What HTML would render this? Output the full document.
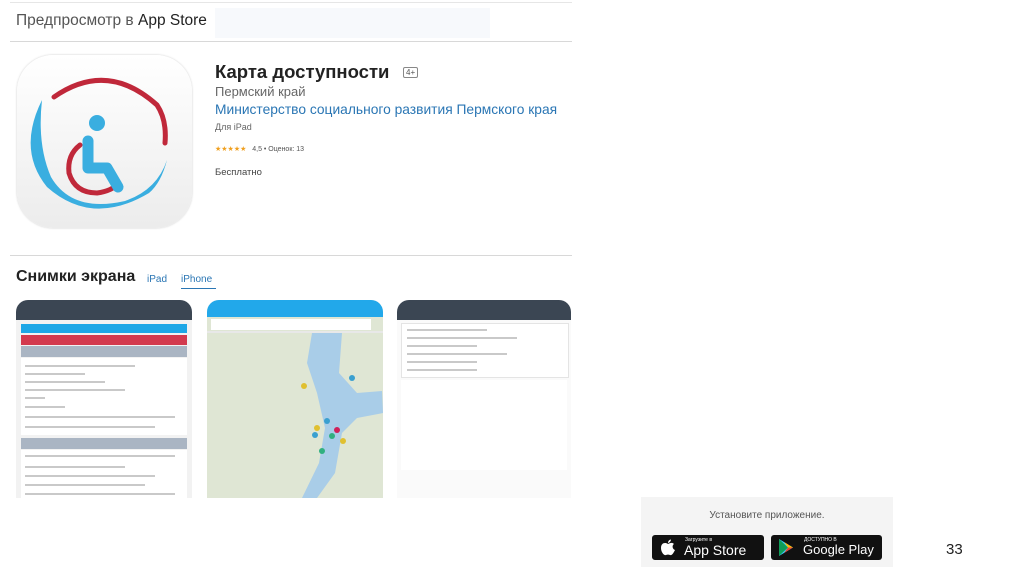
<!DOCTYPE html>
<html><head><meta charset="utf-8"><style>
body{margin:0;width:1024px;height:574px;background:#fff;font-family:"Liberation Sans",sans-serif;position:relative;overflow:hidden}
.a{position:absolute}
.ln{position:absolute;height:1px;background:#d8d8d8}
.tl{position:absolute;height:2px;background:#c9c9c9}
</style></head><body>
<div class="ln" style="left:10px;top:2px;width:562px;background:#e6e6e6"></div>
<div class="a" style="left:215px;top:8px;width:275px;height:30px;background:#f7f9fc"></div>
<div class="a" style="left:16px;top:12px;font-size:15.5px;color:#555">Предпросмотр в <span style="color:#222">App Store</span></div>
<div class="ln" style="left:10px;top:41px;width:562px"></div>
<div class="a" style="left:17px;top:55px;width:175px;height:173px;border-radius:36px;background:linear-gradient(#fff,#ececec);box-shadow:0 0 2px #ccc"></div>
<svg class="a" style="left:17px;top:55px" width="175" height="173" viewBox="0 0 175 173">
<path d="M37 42 Q90 5 140 50 Q150 65 148 88" fill="none" stroke="#c0283a" stroke-width="5" stroke-linecap="round"/>
<path d="M25 45 Q0 95 30 132 Q75 172 132 138 Q144 128 150 105 Q140 135 108 146 Q55 158 34 122 Q20 90 25 45Z" fill="#3aaee0"/>
<path d="M63 90 Q50 100 52 118 Q58 138 80 138 Q95 136 102 128" fill="none" stroke="#c0283a" stroke-width="5" stroke-linecap="round"/>
<circle cx="80" cy="68" r="8" fill="#3aaee0"/>
<path d="M71 86 V113 H90 L101 132" fill="none" stroke="#3aaee0" stroke-width="11" stroke-linecap="round" stroke-linejoin="round"/>
</svg>
<div class="a" style="left:215px;top:61px;font-size:18.5px;font-weight:bold;color:#222">Карта доступности</div>
<div class="a" style="left:403px;top:67px;font-size:8px;line-height:9px;color:#555;border:1px solid #888;border-radius:2px;padding:0 2px">4+</div>
<div class="a" style="left:215px;top:84px;font-size:13px;color:#666">Пермский край</div>
<div class="a" style="left:215px;top:102px;font-size:13.8px;color:#2a76b4">Министерство социального развития Пермского края</div>
<div class="a" style="left:215px;top:122px;font-size:9px;color:#666">Для iPad</div>
<div class="a" style="left:215px;top:145px;font-size:7px;color:#555"><span style="color:#f0a020">★★★★★</span> &nbsp; 4,5 • Оценок: 13</div>
<div class="a" style="left:215px;top:167px;font-size:9.5px;color:#444">Бесплатно</div>
<div class="ln" style="left:10px;top:255px;width:562px"></div>
<div class="a" style="left:16px;top:268px;font-size:16px;font-weight:bold;color:#222">Снимки экрана</div>
<div class="a" style="left:147px;top:274px;font-size:10px;color:#2a76b4">iPad</div>
<div class="a" style="left:181px;top:274px;font-size:10px;color:#2a76b4">iPhone</div>
<div class="a" style="left:181px;top:288px;width:35px;height:1px;background:#2a76b4"></div>
<!-- shot 1 -->
<div class="a" style="left:16px;top:300px;width:176px;height:198px;background:#f2f2f2;border-radius:12px 12px 0 0;overflow:hidden">
<div class="a" style="left:0;top:0;width:176px;height:20px;background:#3b4653"></div>
<div class="a" style="left:5px;top:24px;width:166px;height:9px;background:#1ea7e6"></div>
<div class="a" style="left:5px;top:35px;width:166px;height:10px;background:#d33a4e"></div>
<div class="a" style="left:5px;top:46px;width:166px;height:11px;background:#aab5c3"></div>
<div class="a" style="left:5px;top:58px;width:166px;height:77px;background:#fff"></div>
<div class="tl" style="left:9px;top:65px;width:110px"></div><div class="tl" style="left:9px;top:73px;width:60px"></div><div class="tl" style="left:9px;top:81px;width:80px"></div><div class="tl" style="left:9px;top:89px;width:100px"></div><div class="tl" style="left:9px;top:97px;width:20px"></div><div class="tl" style="left:9px;top:106px;width:40px"></div><div class="tl" style="left:9px;top:116px;width:150px"></div><div class="tl" style="left:9px;top:126px;width:130px"></div>
<div class="a" style="left:5px;top:138px;width:166px;height:11px;background:#aab5c3"></div>
<div class="a" style="left:5px;top:150px;width:166px;height:48px;background:#fff"></div>
<div class="tl" style="left:9px;top:155px;width:150px"></div><div class="tl" style="left:9px;top:166px;width:100px"></div><div class="tl" style="left:9px;top:175px;width:130px"></div><div class="tl" style="left:9px;top:184px;width:120px"></div><div class="tl" style="left:9px;top:193px;width:150px"></div>
</div>
<!-- shot 2 -->
<div class="a" style="left:207px;top:300px;width:176px;height:198px;background:#dfe6d4;border-radius:12px 12px 0 0;overflow:hidden">
<div class="a" style="left:0;top:0;width:176px;height:17px;background:#22a8ea"></div>
<div class="a" style="left:4px;top:19px;width:160px;height:11px;background:#fff"></div>
<div class="a" style="left:0;top:31px;width:176px;height:2px;background:#e8e8e8"></div>
<svg class="a" style="left:0;top:33px" width="176" height="165"><path d="M105 0 L135 0 L132 40 L150 60 L175 58 L176 80 L150 85 L135 100 L128 140 L110 165 L95 165 L112 130 L118 95 L110 60 L100 30Z" fill="#a9cde8"/>
<circle cx="136" cy="108" r="3" fill="#e0c030"/><circle cx="130" cy="97" r="3" fill="#d0205a"/><circle cx="125" cy="103" r="3" fill="#30b080"/><circle cx="115" cy="118" r="3" fill="#30b080"/><circle cx="110" cy="95" r="3" fill="#e0c030"/><circle cx="120" cy="88" r="3" fill="#3aa0d0"/><circle cx="97" cy="53" r="3" fill="#e0c030"/><circle cx="145" cy="45" r="3" fill="#3aa0d0"/><circle cx="108" cy="102" r="3" fill="#3aa0d0"/></svg>
</div>
<!-- shot 3 -->
<div class="a" style="left:397px;top:300px;width:174px;height:198px;background:#fafafa;border-radius:12px 12px 0 0;overflow:hidden">
<div class="a" style="left:0;top:0;width:174px;height:20px;background:#3b4653"></div>
<div class="a" style="left:4px;top:23px;width:166px;height:53px;background:#fff;border:1px solid #e4e4e4"></div>
<div class="tl" style="left:10px;top:29px;width:80px"></div><div class="tl" style="left:10px;top:37px;width:110px"></div><div class="tl" style="left:10px;top:45px;width:70px"></div><div class="tl" style="left:10px;top:53px;width:100px"></div><div class="tl" style="left:10px;top:61px;width:70px"></div><div class="tl" style="left:10px;top:69px;width:70px"></div>
<div class="a" style="left:4px;top:80px;width:166px;height:90px;background:#fff"></div>
</div>
<div class="a" style="left:641px;top:497px;width:252px;height:70px;background:#f4f4f4"></div>
<div class="a" style="left:641px;top:510px;width:252px;text-align:center;font-size:10px;color:#555">Установите приложение.</div>
<div class="a" style="left:652px;top:535px;width:112px;height:25px;background:#111;border-radius:3px;color:#fff">
<svg class="a" style="left:9px;top:4px" width="14" height="17" viewBox="0 0 14 17"><path d="M7 5 C4 3 0 4 0 9 C0 13 3 17 5 16 C6 15.5 8 15.5 9 16 C11 17 13 13 14 11 C11 10 11 6 13 5 C11 3 9 4 7 5Z M7 4 C7 2 8.5 0.5 10 0.5 C10 2 8.5 4 7 4Z" fill="#fff"/></svg>
<div class="a" style="left:33px;top:2px;font-size:5px">Загрузите в</div>
<div class="a" style="left:32px;top:7px;font-size:14px">App Store</div></div>
<div class="a" style="left:771px;top:535px;width:111px;height:25px;background:#111;border-radius:3px;color:#fff">
<svg class="a" style="left:7px;top:4px" width="16" height="17"><path d="M1 0 L15 8.5 L1 17Z" fill="#3bccff"/><path d="M1 0 L10 8.5 L1 17" fill="#0f9d58"/><path d="M10 8.5 L15 8.5 L6 14Z" fill="#ea4335"/><path d="M10 8.5 L15 8.5 L6 3Z" fill="#fbbc05"/></svg>
<div class="a" style="left:33px;top:2px;font-size:5px">ДОСТУПНО В</div>
<div class="a" style="left:32px;top:7px;font-size:13px">Google Play</div></div>
<div class="a" style="left:946px;top:541px;font-size:15px;color:#222">33</div>
</body></html>
